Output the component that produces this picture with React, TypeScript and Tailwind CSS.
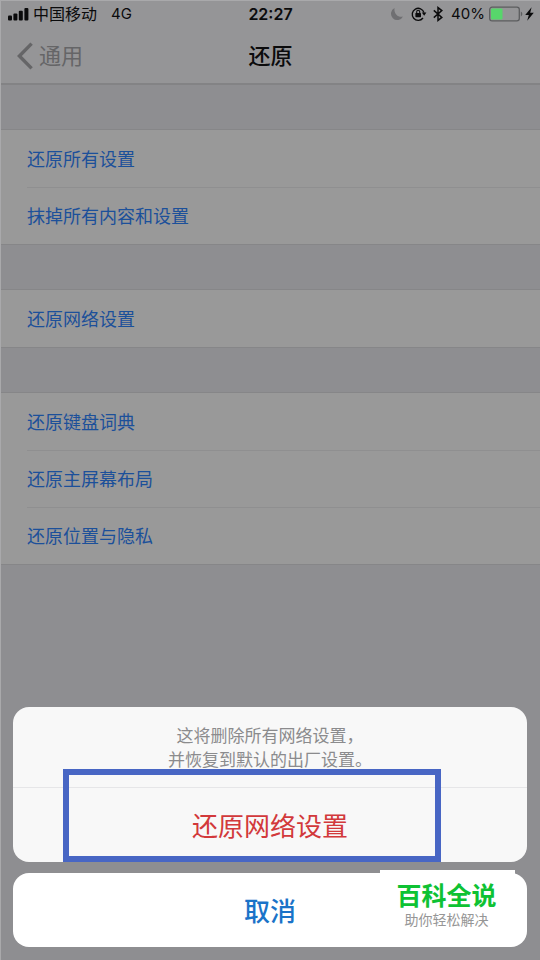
import React from "react";

const sections: string[][] = [
  ["还原所有设置", "抹掉所有内容和设置"],
  ["还原网络设置"],
  ["还原键盘词典", "还原主屏幕布局", "还原位置与隐私"],
];

function SignalIcon() {
  return (
    <svg className="h-4 w-[22px]" viewBox="0 0 22 16" fill="currentColor" aria-hidden="true">
      <rect x="1" y="9.4" width="4" height="5.2" rx="1" />
      <rect x="6.4" y="7.4" width="4" height="7.2" rx="1" />
      <rect x="11.8" y="4.8" width="4" height="9.8" rx="1" />
      <rect x="17.4" y="2" width="4" height="12.6" rx="1" />
    </svg>
  );
}

function MoonIcon() {
  return (
    <svg className="h-4 w-3" viewBox="0 0 12 16" fill="#6f6f72" aria-hidden="true">
      <path d="M3.6 2A6.3 6.3 0 1 0 12 10.4C7.4 12 2.4 7.4 3.6 2Z" />
    </svg>
  );
}

function RotationLockIcon() {
  return (
    <svg className="h-4 w-4" viewBox="0 0 16 16" fill="none" stroke="currentColor" aria-hidden="true">
      <path d="M12 12A6 6 0 1 1 13 6.6" strokeWidth="1.4" />
      <path d="M10.8 6.6H15.4L13.2 9.8Z" fill="currentColor" stroke="none" />
      <rect x="4.4" y="7" width="5.6" height="4.2" rx="0.6" fill="currentColor" stroke="none" />
      <path d="M5.7 7.4V5.8a1.5 1.5 0 0 1 3 0V7.4" strokeWidth="1.1" />
    </svg>
  );
}

function BluetoothIcon() {
  return (
    <svg className="h-4 w-[10px]" viewBox="0 0 10 16" fill="none" stroke="currentColor" strokeWidth="1.5" aria-hidden="true">
      <path d="M0.8 4.4L8.8 11.4L5 14.4V1.6L8.8 4.6L0.8 11.6" />
    </svg>
  );
}

function BatteryIcon() {
  return (
    <svg className="h-4 w-[34px]" viewBox="0 0 34 16" aria-hidden="true">
      <rect x="0.7" y="1.2" width="29.6" height="13.6" rx="2.4" fill="none" stroke="#5c5d5f" strokeWidth="1.3" />
      <rect x="2" y="2.6" width="11.5" height="10.8" rx="1" fill="#57d66b" />
      <path d="M31.8 5.6c2 .8 2 4 0 4.8Z" fill="#5c5d5f" />
    </svg>
  );
}

function BoltIcon() {
  return (
    <svg className="h-4 w-[9px]" viewBox="0 0 9 16" fill="currentColor" aria-hidden="true">
      <path d="M6.6 1.2L0.2 8.9H3.8L2.2 14.8L8.8 6.7H5.2Z" />
    </svg>
  );
}

function StatusBar() {
  return (
    <div className="grid h-[26px] grid-cols-[1fr_auto_1fr] items-center px-1.5 text-base leading-[26px] text-[#0b0b0c]">
      <div className="flex items-center">
        <SignalIcon />
        <span className="ml-1">中国移动</span>
        <span className="ml-3.5 text-[15px]">4G</span>
      </div>
      <span className="font-semibold">22:27</span>
      <div className="flex items-center justify-end">
        <MoonIcon />
        <span className="ml-2 flex"><RotationLockIcon /></span>
        <span className="ml-1.5 flex"><BluetoothIcon /></span>
        <span className="ml-2 text-[15px]">40%</span>
        <span className="ml-1 flex"><BatteryIcon /></span>
        <span className="ml-0.5 flex"><BoltIcon /></span>
      </div>
    </div>
  );
}

export default function App() {
  return (
    <div className="relative flex min-h-screen flex-col border-t border-l border-[#a9a9ab] bg-[#8e8e91] font-['Inter','Noto_Sans_CJK_SC',sans-serif]">
      <header className="border-b-2 border-[#838385] bg-[#959597]">
        <StatusBar />
        <nav className="grid h-14 grid-cols-[1fr_auto_1fr] items-center px-4 pt-0.5 text-[22px] leading-8">
          <button type="button" className="flex items-center gap-1.5 text-[#656567]">
            <svg className="h-7 w-4" viewBox="0 0 16 28" fill="none" stroke="currentColor" strokeWidth="3.4" aria-hidden="true">
              <path d="M14.6 1.6L2.4 14L14.6 26.4" />
            </svg>
            通用
          </button>
          <h1 className="font-medium text-[#0b0b0c]">还原</h1>
        </nav>
      </header>

      <main>
        {sections.map((rows) => (
          <ul key={rows[0]} className="mt-11 border-y border-[#868688] bg-[#999999]">
            {rows.map((label, i) => (
              <li key={label} className="pl-[26px]">
                <button
                  type="button"
                  className={
                    i === 0
                      ? "block h-[57px] w-full pt-0.5 text-left text-lg text-[#1c509a]"
                      : "block h-[57px] w-full border-t border-[#8f8f90] pt-0.5 text-left text-lg text-[#1c509a]"
                  }
                >
                  {label}
                </button>
              </li>
            ))}
          </ul>
        ))}
      </main>

      <div role="dialog" aria-label="还原网络设置" className="absolute right-[13px] bottom-[13px] left-3 flex flex-col gap-[11px]">
        <div className="relative rounded-2xl bg-[#f8f8f8]">
          <p className="px-4 pt-[17px] pb-[15px] text-center text-[17px] leading-6 text-[#8b8b8d]">
            这将删除所有网络设置，
            <br />
            并恢复到默认的出厂设置。
          </p>
          <button type="button" className="block h-[75px] w-full rounded-b-2xl border-t border-[#e6e6e8] pt-0.5 text-[26px] text-[#d2393b]">
            还原网络设置
          </button>
          <div className="pointer-events-none absolute right-[86px] bottom-0 left-[50px] h-[93px] border-6 border-[#4866c4]" />
        </div>
        <div className="relative">
          <button type="button" className="block h-[74px] w-full rounded-2xl bg-white pt-0.5 text-[26px] font-medium text-[#1a73c8]">
            取消
          </button>
          <div className="absolute -top-[3px] right-3 w-[135px] bg-white pt-2.5 pr-0.5 text-center">
            <div className="text-[25px] leading-8 font-bold text-[#0ec233]">百科全说</div>
            <div className="text-sm leading-4 text-[#969696]">助你轻松解决</div>
          </div>
        </div>
      </div>
    </div>
  );
}
